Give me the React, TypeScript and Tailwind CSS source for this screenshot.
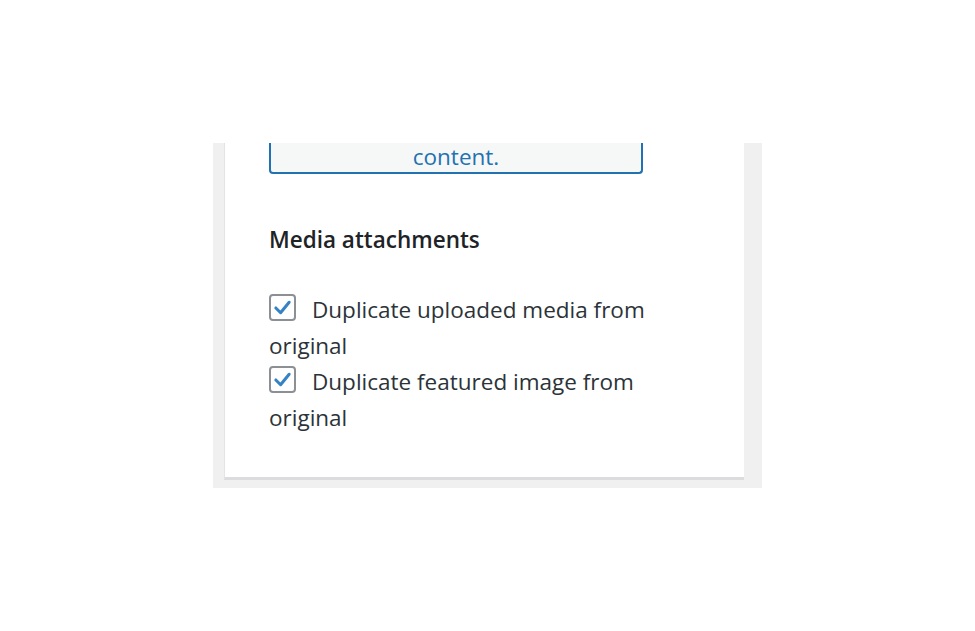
import { useState } from 'react';

function CheckRow({ label }: { label: string }) {
  const [checked, setChecked] = useState(true);

  return (
    <label className="block text-[22.5px] leading-[36px] text-[#2c3338] cursor-pointer">
      <span
        onClick={() => setChecked(!checked)}
        className="inline-flex items-center justify-center w-[27px] h-[27px] mr-[16px] align-[1px] rounded-[4px] border-2 border-[#8c8f94] bg-white"
      >
        {checked && (
          <svg width="19" height="19" viewBox="0 0 20 20">
            <path d="M3 10.5 L8 15.5 L17 4.5" fill="none" stroke="#3582c4" strokeWidth="3.2" strokeLinecap="round" strokeLinejoin="round" />
          </svg>
        )}
      </span>
      {label}
    </label>
  );
}

export default function App() {
  return (
    <div className="min-h-screen bg-white pt-[143px] pl-[213px]" style={{ fontFamily: '"Open Sans", "Noto Sans", sans-serif' }}>
      <div className="w-[549px] h-[345px] bg-[#f0f0f1] pl-[11px] pr-[18px] pb-[8px]">
        <div className="h-full bg-white border-l border-[#e4e4e6] border-b-[3px] border-b-[#dcdcde] pl-[44px] pr-[45px]">
          <div className="w-[374px] h-[31px] border-2 border-t-0 border-[#2271b1] rounded-b-[4px] bg-[#f6f7f7] flex items-end justify-center">
            <span className="text-[22.5px] leading-[30px] text-[#2271b1]">content.</span>
          </div>

          <h3 className="mt-[51px] text-[22.5px] leading-[30px] font-semibold text-[#1d2327]">Media attachments</h3>

          <div className="mt-[37px] pr-[40px]">
            <CheckRow label="Duplicate uploaded media from original" />
            <CheckRow label="Duplicate featured image from original" />
          </div>
        </div>
      </div>
    </div>
  );
}
